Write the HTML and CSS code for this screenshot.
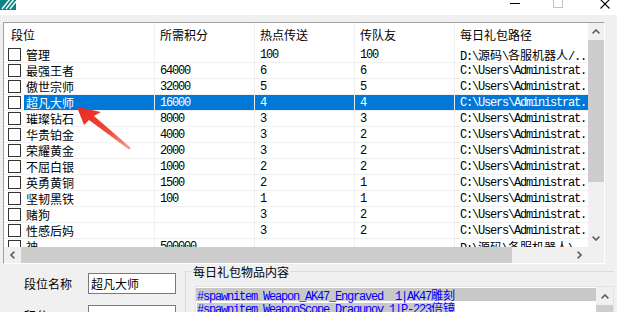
FILE: index.html
```html
<!DOCTYPE html>
<html lang="zh">
<head>
<meta charset="utf-8">
<title>段位</title>
<link rel="stylesheet" href="styles.css">
</head>
<body>
<div class="titlebar">
  <svg class="app-icon" width="16" height="16" viewBox="0 0 16 16">
    <rect x="0" y="0" width="16" height="16" fill="#0b8482"/>
    <g stroke="#ffffff" stroke-width="1.4">
      <line x1="2" y1="15" x2="10" y2="5"/>
      <line x1="6" y1="15" x2="14" y2="5"/>
      <line x1="10" y1="15" x2="16" y2="7.5"/>
    </g>
  </svg>
  <div class="caps">
    <svg class="cap-min" width="10" height="1" viewBox="0 0 10 1"><rect width="10" height="1" fill="#000"/></svg>
    <svg class="cap-max" width="10" height="10" viewBox="0 0 10 10"><rect x="0.5" y="0.5" width="9" height="9" fill="none" stroke="#c4c4c4"/></svg>
    <svg class="cap-close" width="10" height="10" viewBox="0 0 10 10"><path d="M0.5 0.5 L9.5 9.5 M9.5 0.5 L0.5 9.5" stroke="#000" stroke-width="1.1"/></svg>
  </div>
</div>

<div class="body">
  <div class="listview">
    <div class="lv-content">
      <div class="row hdr">
        <div class="cell c1">段位</div>
        <div class="cell c2">所需积分</div>
        <div class="cell c3">热点传送</div>
        <div class="cell c4">传队友</div>
        <div class="cell c5">每日礼包路径</div>
      </div>
      <div class="row">
        <div class="cell c1"><span class="cb"></span><span class="lbl">管理</span></div>
        <div class="cell c2 mono"></div><div class="cell c3 mono">100</div><div class="cell c4 mono">100</div>
        <div class="cell c5 mono">D:\<span class="cj">源码</span>\<span class="cj">各服机器人</span>/..</div>
      </div>
      <div class="row">
        <div class="cell c1"><span class="cb"></span><span class="lbl">最强王者</span></div>
        <div class="cell c2 mono">64000</div><div class="cell c3 mono">6</div><div class="cell c4 mono">6</div>
        <div class="cell c5 mono">C:\Users\Administrat.</div>
      </div>
      <div class="row">
        <div class="cell c1"><span class="cb"></span><span class="lbl">傲世宗师</span></div>
        <div class="cell c2 mono">32000</div><div class="cell c3 mono">5</div><div class="cell c4 mono">5</div>
        <div class="cell c5 mono">C:\Users\Administrat.</div>
      </div>
      <div class="row sel">
        <div class="cell c1"><span class="cb"></span><span class="lbl">超凡大师</span></div>
        <div class="cell c2 mono">16000</div><div class="cell c3 mono">4</div><div class="cell c4 mono">4</div>
        <div class="cell c5 mono">C:\Users\Administrat.</div>
      </div>
      <div class="row">
        <div class="cell c1"><span class="cb"></span><span class="lbl">璀璨钻石</span></div>
        <div class="cell c2 mono">8000</div><div class="cell c3 mono">3</div><div class="cell c4 mono">3</div>
        <div class="cell c5 mono">C:\Users\Administrat.</div>
      </div>
      <div class="row">
        <div class="cell c1"><span class="cb"></span><span class="lbl">华贵铂金</span></div>
        <div class="cell c2 mono">4000</div><div class="cell c3 mono">3</div><div class="cell c4 mono">2</div>
        <div class="cell c5 mono">C:\Users\Administrat.</div>
      </div>
      <div class="row">
        <div class="cell c1"><span class="cb"></span><span class="lbl">荣耀黄金</span></div>
        <div class="cell c2 mono">2000</div><div class="cell c3 mono">3</div><div class="cell c4 mono">2</div>
        <div class="cell c5 mono">C:\Users\Administrat.</div>
      </div>
      <div class="row">
        <div class="cell c1"><span class="cb"></span><span class="lbl">不屈白银</span></div>
        <div class="cell c2 mono">1000</div><div class="cell c3 mono">2</div><div class="cell c4 mono">2</div>
        <div class="cell c5 mono">C:\Users\Administrat.</div>
      </div>
      <div class="row">
        <div class="cell c1"><span class="cb"></span><span class="lbl">英勇黄铜</span></div>
        <div class="cell c2 mono">1500</div><div class="cell c3 mono">2</div><div class="cell c4 mono">1</div>
        <div class="cell c5 mono">C:\Users\Administrat.</div>
      </div>
      <div class="row">
        <div class="cell c1"><span class="cb"></span><span class="lbl">坚韧黑铁</span></div>
        <div class="cell c2 mono">100</div><div class="cell c3 mono">1</div><div class="cell c4 mono">1</div>
        <div class="cell c5 mono">C:\Users\Administrat.</div>
      </div>
      <div class="row">
        <div class="cell c1"><span class="cb"></span><span class="lbl">赌狗</span></div>
        <div class="cell c2 mono"></div><div class="cell c3 mono">3</div><div class="cell c4 mono">2</div>
        <div class="cell c5 mono">C:\Users\Administrat.</div>
      </div>
      <div class="row">
        <div class="cell c1"><span class="cb"></span><span class="lbl">性感后妈</span></div>
        <div class="cell c2 mono"></div><div class="cell c3 mono">3</div><div class="cell c4 mono">2</div>
        <div class="cell c5 mono">C:\Users\Administrat.</div>
      </div>
      <div class="row">
        <div class="cell c1"><span class="cb"></span><span class="lbl">神</span></div>
        <div class="cell c2 mono">500000</div><div class="cell c3 mono"></div><div class="cell c4 mono"></div>
        <div class="cell c5 mono">D:\<span class="cj">源码</span>\<span class="cj">各服机器人</span>\..</div>
      </div>
    </div>
    <div class="vscroll">
      <div class="sb-btn"><svg width="8" height="5" viewBox="0 0 8 5"><path d="M0.6 4.4 L4 1 L7.4 4.4" fill="none" stroke="#606060" stroke-width="1.6"/></svg></div>
      <div class="vthumb"></div>
      <div class="track"></div>
      <div class="sb-btn"><svg width="8" height="5" viewBox="0 0 8 5"><path d="M0.6 0.6 L4 4 L7.4 0.6" fill="none" stroke="#606060" stroke-width="1.6"/></svg></div>
    </div>
    <div class="hscroll">
      <div class="sb-btn h"><svg width="5" height="8" viewBox="0 0 5 8"><path d="M4.4 0.6 L1 4 L4.4 7.4" fill="none" stroke="#606060" stroke-width="1.6"/></svg></div>
      <div class="hthumb"></div>
      <div class="track"></div>
      <div class="sb-btn h"><svg width="5" height="8" viewBox="0 0 5 8"><path d="M0.6 0.6 L4 4 L0.6 7.4" fill="none" stroke="#606060" stroke-width="1.6"/></svg></div>
    </div>
    <div class="corner"></div>
  </div>

  <div class="lower">
    <div class="form">
      <div class="field"><span class="flabel">段位名称</span><div class="input">超凡大师</div></div>
      <div class="field second"><span class="flabel">积分</span><div class="input"></div></div>
    </div>
    <div class="group">
      <div class="group-title">每日礼包物品内容</div>
      <div class="textarea">
        <div class="ta-text">
          <div class="ln full">#spawnitem Weapon_AK47_Engraved  1|AK47<span class="cj">雕刻</span></div>
          <div class="ln"><span class="hl">#spawnitem WeaponScope_Dragunov 1|P-223<span class="cj">倍镜</span></span></div>
        </div>
        <div class="ta-scroll">
          <div class="sb-btn t"><svg width="8" height="5" viewBox="0 0 8 5"><path d="M0.6 4.4 L4 1 L7.4 4.4" fill="none" stroke="#606060" stroke-width="1.6"/></svg></div>
          <div class="ta-thumb"></div>
        </div>
      </div>
    </div>
  </div>
</div>

<svg class="arrow" width="617" height="312" viewBox="0 0 617 312">
  <defs>
    <linearGradient id="ag" x1="77" y1="107" x2="131" y2="149" gradientUnits="userSpaceOnUse">
      <stop offset="0" stop-color="#e8281e"/>
      <stop offset="0.6" stop-color="#ee4a3c"/>
      <stop offset="1" stop-color="#f6a29a"/>
    </linearGradient>
  </defs>
  <polygon points="77,107 101,112 94,116 131,148 129,149.5 89,120 84,125" fill="url(#ag)"/>
</svg>
</body>
</html>
```

FILE: styles.css
```css
html, body {
  margin: 0;
  padding: 0;
}
body {
  width: 617px;
  height: 312px;
  overflow: hidden;
  position: relative;
  background: #f0f0f0;
  color: #000;
  font-family: "Noto Sans CJK SC", "Noto Sans", sans-serif;
  font-size: 12px;
}

/* title bar */
.titlebar {
  height: 15px;
  background: #fff;
  display: flex;
  align-items: flex-start;
  padding-right: 7px;
  overflow: hidden;
}
.app-icon { margin-top: -6px; flex: none; display: block; }
.caps { margin-left: auto; display: flex; align-items: flex-start; }
.caps svg { display: block; flex: none; }
.cap-min { margin-top: 3px; }
.cap-max { margin-top: -2px; margin-left: 33px; }
.cap-close { margin-top: -1px; margin-left: 37px; }

/* body */
.body { padding: 7px 12px 0 3px; }

.listview {
  height: 242px;
  box-sizing: border-box;
  border: 1px solid;
  border-color: #a0a0a0 #ffffff #ffffff #a0a0a0;
  background: #fff;
  display: grid;
  grid-template-columns: 584px 16px;
  grid-template-rows: 224px 16px;
}
.lv-content { overflow: hidden; }

.row { display: flex; }
.cell {
  box-sizing: border-box;
  height: 16px;
  line-height: 15px;
  border-right: 1px solid #f0f0f0;
  border-bottom: 1px solid #f0f0f0;
  padding-left: 5px;
  white-space: nowrap;
  overflow: hidden;
  flex: none;
}
.c1 { width: 151px; padding-left: 4px; display: flex; align-items: stretch; }
.c2, .c3, .c4 { width: 100px; }
.c5 { flex: 1; border-right: none; }

.hdr .cell { height: 24px; line-height: 24px; border-bottom: none; }
.hdr .c1 { padding-left: 7px; display: block; }

.cb {
  width: 13px;
  height: 13px;
  box-sizing: border-box;
  border: 1px solid #333;
  background: #fff;
  margin-top: 1px;
  align-self: flex-start;
  flex: none;
}
.lbl { margin-left: 3px; padding-left: 2px; flex: 1; }

.mono {
  font-family: "Liberation Mono", "DejaVu Sans Mono", monospace;
  font-size: 12px;
  letter-spacing: -1.2px;
  padding-top: 1px;
  line-height: 14px;
}
.cj {
  font-family: "Noto Sans CJK SC", sans-serif;
  font-size: 12px;
  letter-spacing: 0;
}

.sel .lbl, .sel .c2, .sel .c3, .sel .c4, .sel .c5 {
  background: #0078d7;
  color: #fff;
}
.sel .cell { border-right-color: #e8f0f8; }

/* scrollbars */
.vscroll { background: #f0f0f0; display: flex; flex-direction: column; }
.sb-btn { height: 17px; flex: none; display: flex; align-items: center; justify-content: center; }
.sb-btn svg { display: block; }
.vthumb { height: 142px; background: #cdcdcd; flex: none; }
.track { flex: 1; }
.hscroll { grid-column: 1; background: #f0f0f0; display: flex; }
.sb-btn.h { width: 17px; height: 16px; }
.hthumb { width: 491px; background: #cdcdcd; flex: none; }
.corner { background: #f0f0f0; }

/* lower form */
.lower { display: flex; margin-top: 1px; }
.form { width: 182px; flex: none; box-sizing: border-box; padding-left: 21px; }
.field { display: flex; align-items: center; height: 21px; margin-top: 8px; }
.field.second { margin-top: 11px; }
.flabel { width: 64px; flex: none; line-height: 21px; }
.input {
  width: 88px;
  height: 21px;
  box-sizing: border-box;
  border: 1px solid #7a7a7a;
  background: #fff;
  padding-left: 2px;
  line-height: 19px;
  flex: none;
}

.group {
  flex: 1;
  margin-top: 6px;
  border-top: 1px solid #dcdcdc;
  border-left: 1px solid #dcdcdc;
}
.group-title {
  width: max-content;
  margin: -7px 0 0 6px;
  padding: 0 1px;
  line-height: 13px;
  background: #f0f0f0;
}
.textarea {
  width: 419px;
  height: 40px;
  box-sizing: border-box;
  margin: 8px 0 0 9px;
  border: 1px solid #e3e3e3;
  background: #fff;
  display: flex;
}
.ta-text { width: 400px; flex: none; padding-top: 1px; }
.ln {
  font-family: "Liberation Mono", "DejaVu Sans Mono", monospace;
  font-size: 12px;
  letter-spacing: -1.2px;
  line-height: 13px;
  height: 13px;
  color: #0000ff;
  white-space: pre;
  padding-left: 1px;
}
.ln .cj { line-height: 13px; }
.ln.full { background: #c8c8c8; }
.ln .hl { background: #c8c8c8; }
.ta-scroll { width: 17px; flex: none; background: #f0f0f0; display: flex; flex-direction: column; }
.sb-btn.t { height: 18px; }
.ta-thumb { flex: 1; background: #cdcdcd; }

.arrow { position: absolute; left: 0; top: 0; pointer-events: none; }
```
